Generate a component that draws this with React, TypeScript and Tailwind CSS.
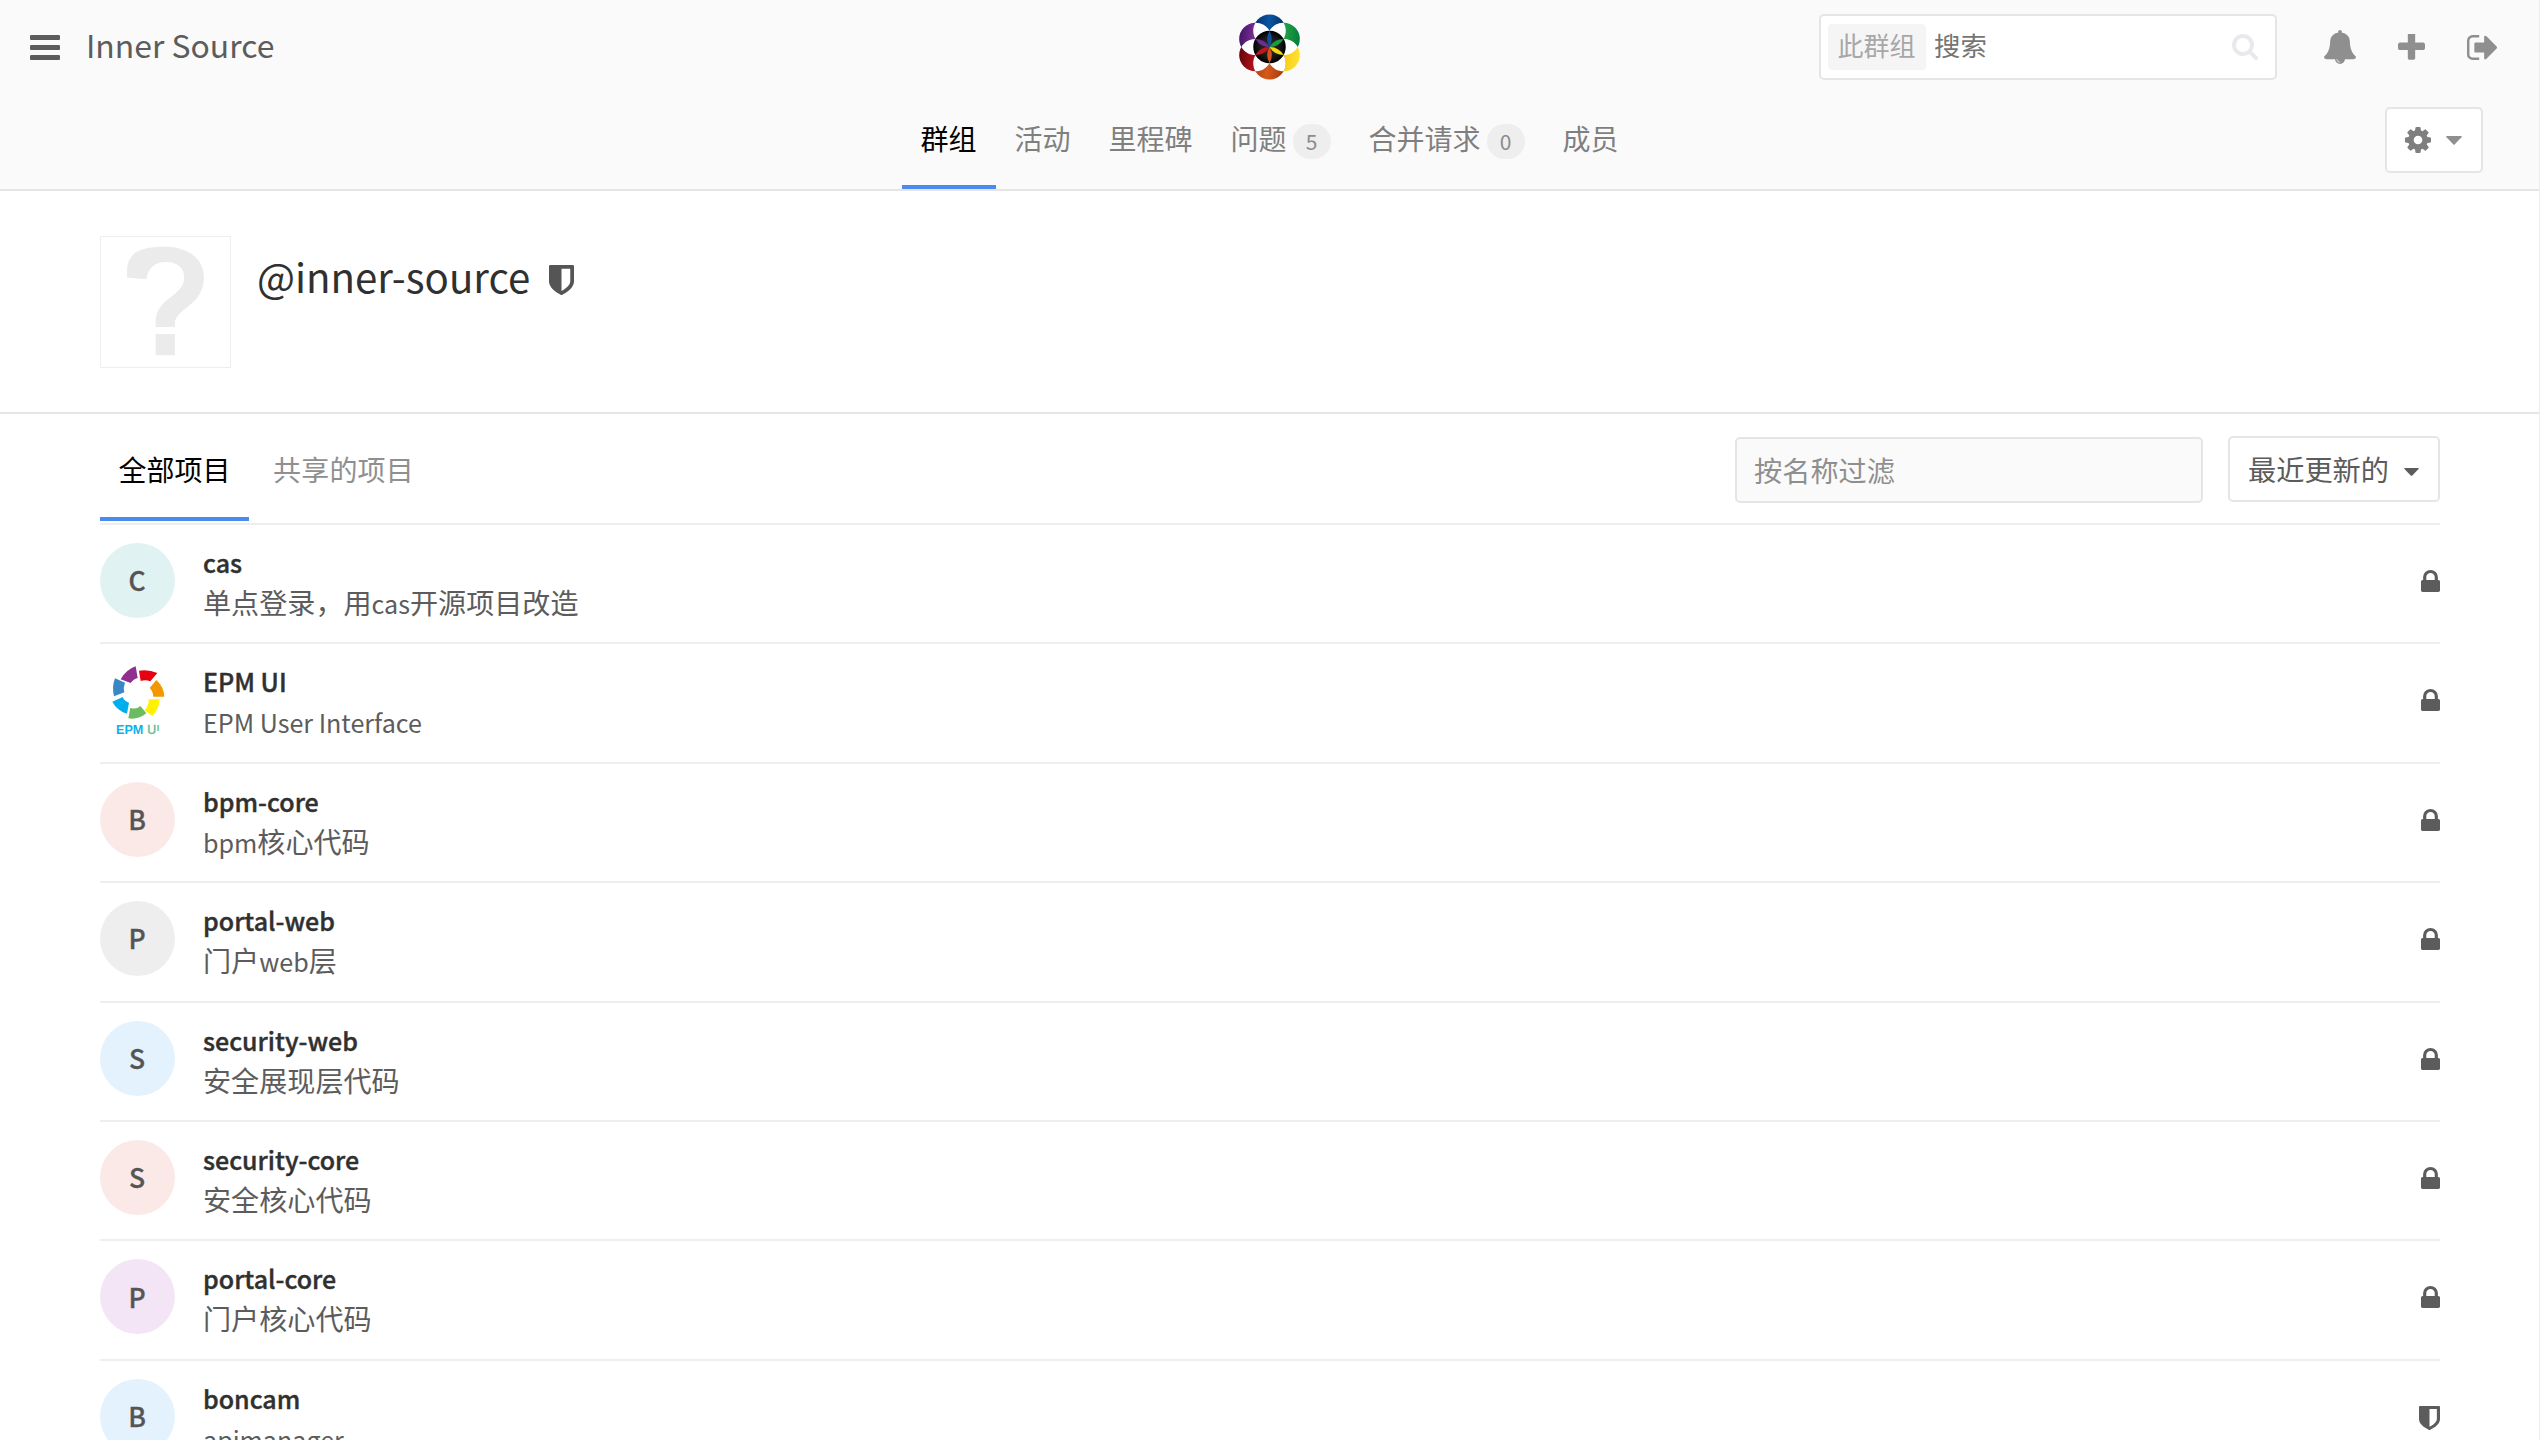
import React from 'react';

const PATHS = {
  bars: {
    box: '128 256 1536 1280',
    d: 'M1664 1344v128q0 26-19 45t-45 19h-1408q-26 0-45-19t-19-45v-128q0-26 19-45t45-19h1408q26 0 45 19t19 45zm0-512v128q0 26-19 45t-45 19h-1408q-26 0-45-19t-19-45v-128q0-26 19-45t45-19h1408q26 0 45 19t19 45zm0-512v128q0 26-19 45t-45 19h-1408q-26 0-45-19t-19-45v-128q0-26 19-45t45-19h1408q26 0 45 19t19 45z',
  },
  bell: {
    box: '64 0 1664 1792',
    d: 'M912 1696q0-16-16-16-59 0-101.5-42.5t-42.5-101.5q0-16-16-16t-16 16q0 73 51.5 124.5t124.5 51.5q16 0 16-16zm816-288q0 52-38 90t-90 38h-448q0 106-75 181t-181 75-181-75-75-181h-448q-52 0-90-38t-38-90q50-42 91-88t85-119.5 74.5-158.5 50-206 19.5-260q0-152 117-282.5t307-158.5q-8-19-8-39 0-40 28-68t68-28 68 28 28 68q0 20-8 39 190 28 307 158.5t117 282.5q0 139 19.5 260t50 206 74.5 158.5 85 119.5 91 88z',
  },
  plus: {
    box: '192 192 1408 1408',
    d: 'M1600 736v192q0 40-28 68t-68 28h-416v416q0 40-28 68t-68 28h-192q-40 0-68-28t-28-68v-416h-416q-40 0-68-28t-28-68v-192q0-40 28-68t68-28h416v-416q0-40 28-68t68-28h192q40 0 68 28t28 68v416h416q40 0 68 28t28 68z',
  },
  signOut: {
    box: '64 256 1568 1280',
    d: 'M704 1440q0 4 1 20t.5 26.5-3 23.5-10 19.5-20.5 6.5h-320q-119 0-203.5-84.5t-84.5-203.5v-704q0-119 84.5-203.5t203.5-84.5h320q13 0 22.5 9.5t9.5 22.5q0 4 1 20t.5 26.5-3 23.5-10 19.5-20.5 6.5h-320q-66 0-113 47t-47 113v704q0 66 47 113t113 47h312l11.5 1 11.5 3 8 5.5 7 9 2 13.5zm928-544q0 26-19 45l-544 544q-19 19-45 19t-45-19-19-45v-288h-448q-26 0-45-19t-19-45v-384q0-26 19-45t45-19h448v-288q0-26 19-45t45-19 45 19l544 544q19 19 19 45z',
  },
  cog: {
    box: '128 128 1536 1536',
    d: 'M1152 896q0-106-75-181t-181-75-181 75-75 181 75 181 181 75 181-75 75-181zm512-109v222q0 12-8 23t-20 13l-185 28q-19 54-39 91 35 50 107 138 10 12 10 25t-9 23q-27 37-99 108t-94 71q-12 0-26-9l-138-108q-44 23-91 38-16 136-29 186-7 28-36 28h-222q-14 0-24.5-8.5t-11.5-21.5l-28-184q-49-16-90-37l-141 107q-10 9-25 9-14 0-25-11-126-114-165-168-7-10-7-23 0-12 8-23 15-21 51-66.5t54-70.5q-27-50-41-99l-183-27q-13-2-21-12.5t-8-23.5v-222q0-12 8-23t19-13l186-28q14-46 39-92-40-57-107-138-10-12-10-24 0-10 9-23 26-36 98.5-107.5t94.5-71.5q13 0 26 10l138 107q44-23 91-38 16-136 29-186 7-28 36-28h222q14 0 24.5 8.5t11.5 21.5l28 184q49 16 90 37l142-107q9-9 24-9 13 0 25 10 129 119 165 170 7 8 7 22 0 12-8 23-15 21-51 66.5t-54 70.5q26 50 41 98l183 28q13 2 21 12.5t8 23.5z',
  },
  lock: {
    box: '320 128 1152 1408',
    d: 'M640 768h512v-192q0-106-75-181t-181-75-181 75-75 181v192zm832 96v576q0 40-28 68t-68 28h-960q-40 0-68-28t-28-68v-576q0-40 28-68t68-28h32v-192q0-184 132-316t316-132 316 132 132 316v192h32q40 0 68 28t28 68z',
  },
  shield: {
    box: '256 128 1280 1536',
    d: 'M1344 960v-640h-448v1137q119-63 213-137 235-184 235-360zm192-768v768q0 86-33.5 170.5t-83 150-118 127.5-126.5 103-121 77.5-89.5 49.5-42.5 20q-12 6-26 6t-26-6q-16-7-42.5-20t-89.5-49.5-121-77.5-126.5-103-118-127.5-83-150-33.5-170.5v-768q0-26 19-45t45-19h1152q26 0 45 19t19 45z',
  },
  search: {
    box: '64 128 1664 1664',
    d: 'M1216 832q0-185-131.5-316.5t-316.5-131.5-316.5 131.5-131.5 316.5 131.5 316.5 316.5 131.5 316.5-131.5 131.5-316.5zm512 832q0 52-38 90t-90 38q-54 0-90-38l-343-342q-179 124-399 124-143 0-273.5-55.5t-225-150-150-225-55.5-273.5 55.5-273.5 150-225 225-150 273.5-55.5 273.5 55.5 225 150 150 225 55.5 273.5q0 220-124 399l343 343q37 37 37 90z',
  },
};

function Icon({ name, className }: { name: keyof typeof PATHS; className: string }) {
  return (
    <svg viewBox={PATHS[name].box} preserveAspectRatio="none" fill="currentColor" className={'shrink-0 ' + className}>
      <path d={PATHS[name].d} />
    </svg>
  );
}

function Caret({ className }: { className: string }) {
  return (
    <svg viewBox="0 0 16 9" preserveAspectRatio="none" fill="currentColor" className={'shrink-0 ' + className}>
      <path d="M0.8 0h14.4q1 0.3 0.3 1.2L8.6 8.6q-0.6 0.5-1.2 0L0.5 1.2Q-0.2 0.3 0.8 0z" />
    </svg>
  );
}

const R = 49;
const polar = (deg: number, r: number): [number, number] => [
  r * Math.cos((deg * Math.PI) / 180),
  -r * Math.sin((deg * Math.PI) / 180),
];
const lens = (deg: number, length: number) => {
  const [x, y] = polar(deg, length);
  return `M0 0A${R} ${R} 0 0 1 ${x} ${y}A${R} ${R} 0 0 1 0 0z`;
};

const FLOWER = [
  { deg: 90, from: '#062a63', mid: '#0a56a2', to: '#062a63', petal: '#0f4f9c' },
  { deg: 30, from: '#35b24a', mid: '#27a548', to: '#04803c', petal: '#1b9a40' },
  { deg: -30, from: '#e3a800', mid: '#f8c918', to: '#ffe02e', petal: '#f7d70e' },
  { deg: -90, from: '#a33a0c', mid: '#d65a1a', to: '#a33a0c', petal: '#d4541a' },
  { deg: -150, from: '#5c0408', mid: '#b01218', to: '#b01218', petal: '#c2181b' },
  { deg: 150, from: '#3d1460', mid: '#7d2c96', to: '#7d2c96', petal: '#6f2b8f' },
];

function Flower() {
  return (
    <svg viewBox="-92 -99 184 198" className="h-[66px] w-[61px]">
      <defs>
        {FLOWER.map((f, i) => (
          <linearGradient key={i} id={'petal' + i} x1="0" y1="0" x2="1" y2="0.1">
            <stop offset="0" stopColor={f.from} />
            <stop offset="0.5" stopColor={f.mid} />
            <stop offset="1" stopColor={f.to} />
          </linearGradient>
        ))}
        <radialGradient id="core">
          <stop offset="0" stopColor="#333" />
          <stop offset="0.7" stopColor="#151515" />
          <stop offset="1" stopColor="#000" />
        </radialGradient>
      </defs>
      {FLOWER.map((f, i) => {
        const [cx, cy] = polar(f.deg, R);
        return <circle key={i} cx={cx} cy={cy} r={R} fill={`url(#petal${i})`} />;
      })}
      {FLOWER.map((f, i) => (
        <path key={i} d={lens(f.deg + 30, R * Math.sqrt(3))} fill="#fff" />
      ))}
      <circle r={R} fill="url(#core)" />
      {FLOWER.map((f, i) => (
        <path key={i} d={lens(f.deg, R)} fill={f.petal} />
      ))}
    </svg>
  );
}

function EpmLogo() {
  return (
    <svg viewBox="30 65 225 225" className="size-[75px] shrink-0">
      <path fill="#8f3090" d="M92 117Q108 88 137 78L143 113Q130 116 122 128z" />
      <path fill="#e60012" d="M147 91Q175 86 202 98L181 123Q167 117 152 122z" />
      <path fill="#f39800" d="M199 119Q222 140 223 169L190 169Q189 153 179 143z" />
      <path fill="#fff100" d="M176 177H209Q208 205 187 227L164 210Q177 196 176 177z" />
      <path fill="#6bbb60" d="M121 202Q138 209 151 197L169 219Q144 239 115 234z" />
      <path fill="#00aeeb" d="M98 170Q103 183 117 187L111 220Q81 211 67 184z" />
      <path fill="#3a87c8" d="M75 114L105 127Q99 141 103 156L72 168Q65 140 75 114z" />
      <text y="280" fontFamily="Liberation Sans, sans-serif" fontWeight="700" fontSize="37">
        <tspan x="78" fill="#0db1ea" textLength="82" lengthAdjust="spacingAndGlyphs">EPM</tspan>
        <tspan x="172" fill="#66b98a" fontWeight="400" stroke="#66b98a" strokeWidth="1.2">U</tspan>
        <tspan x="200" y="273" fill="#6dbb62" fontSize="27">I</tspan>
      </text>
    </svg>
  );
}

/* Latin runs are set smaller than the Chinese runs around them. */
function Mixed({ text }: { text: string }) {
  return (
    <>
      {text.split(/([\x20-\x7e]+)/).filter(Boolean).map((run, i) => (
        <span key={i} className={/^[\x20-\x7e]/.test(run) ? 'text-[25.1px]' : 'text-[28.1px]'}>
          {run}
        </span>
      ))}
    </>
  );
}

const TABS = [
  { label: '群组', active: true },
  { label: '活动' },
  { label: '里程碑' },
  { label: '问题', count: 5 },
  { label: '合并请求', count: 0 },
  { label: '成员' },
];

const PROJECTS = [
  { name: 'cas', desc: '单点登录，用cas开源项目改造', letter: 'C', bg: 'bg-[#e0f2f1]', icon: 'lock' },
  { name: 'EPM UI', desc: 'EPM User Interface', letter: '', bg: '', icon: 'lock' },
  { name: 'bpm-core', desc: 'bpm核心代码', letter: 'B', bg: 'bg-[#fbe9e7]', icon: 'lock' },
  { name: 'portal-web', desc: '门户web层', letter: 'P', bg: 'bg-[#eeeeee]', icon: 'lock' },
  { name: 'security-web', desc: '安全展现层代码', letter: 'S', bg: 'bg-[#e3f2fd]', icon: 'lock' },
  { name: 'security-core', desc: '安全核心代码', letter: 'S', bg: 'bg-[#fbe9e7]', icon: 'lock' },
  { name: 'portal-core', desc: '门户核心代码', letter: 'P', bg: 'bg-[#f3e5f5]', icon: 'lock' },
  { name: 'boncam', desc: 'apimanager', letter: 'B', bg: 'bg-[#e3f2fd]', icon: 'shield' },
] as const;

export default function App() {
  return (
    <div className="h-[1440px] w-[2540px] overflow-hidden border-r border-[#ededed] bg-white font-['Noto_Sans_CJK_SC',sans-serif] text-[28px] text-[#5c5c5c]">
      <header className="h-[191px] border-b-2 border-[#e5e5e5] bg-[#fafafa]">
        <div className="grid h-[94px] grid-cols-[1fr_61px_1fr] items-center">
          <div className="flex items-center pl-[30px]">
            <Icon name="bars" className="h-[25px] w-[30px]" />
            <h1 className="mb-[7px] ml-[26px] text-[31.9px] leading-[40px]">Inner Source</h1>
          </div>
          <Flower />
          <div className="flex items-center justify-end pr-[42px]">
            <div className="flex h-[66px] w-[458px] items-center rounded-[5px] border-2 border-[#e5e5e5] bg-white pr-[17px] pl-[7px]">
              <span className="flex h-[46px] w-[98px] items-center justify-center rounded-[4px] bg-[#f5f5f5] pr-[1px] pb-[4px] text-[26px] leading-none text-[#a7a7a7]">此群组</span>
              <span className="mb-[4px] ml-2 flex-1 text-[26.4px] leading-none text-[#757575]">搜索</span>
              <Icon name="search" className="size-[26px] text-[#e7e9ed]" />
            </div>
            <Icon name="bell" className="ml-[47px] h-[34px] w-[32px] text-[#8f8f8f]" />
            <Icon name="plus" className="ml-[42px] size-[27px] text-[#8f8f8f]" />
            <Icon name="signOut" className="ml-[42px] h-[25px] w-[30px] text-[#8f8f8f]" />
          </div>
        </div>
        <div className="grid h-[95px] grid-cols-[902px_1fr_auto]">
          <div />
          <nav className="flex">
            {TABS.map((t) => (
              <div
                key={t.label}
                className={
                  t.active
                    ? 'flex items-center border-b-4 border-[#4a8bee] pr-[19.5px] pl-[18.5px] text-black'
                    : 'flex items-center border-b-4 border-transparent pr-[19.5px] pl-[18.5px] text-[#7f7f7f]'
                }
              >
                <span className="mb-[3px] leading-none">{t.label}</span>
                {t.count !== undefined && (
                  <span className="mt-[4px] mr-[-0.5px] ml-[6.5px] flex h-[35px] w-[38px] items-center justify-center rounded-full bg-[#eeeeee] pr-[1px] text-[21px] leading-none text-[#8c8c8c]">
                    {t.count}
                  </span>
                )}
              </div>
            ))}
          </nav>
          <button className="mt-[13px] mr-[56px] flex h-[66px] w-[98px] items-center rounded-[5px] border-2 border-[#e5e5e5] bg-white pl-[18px]">
            <Icon name="cog" className="size-[26px] text-[#7f7f7f]" />
            <Caret className="ml-[15px] h-[9px] w-[16px] text-[#8f8f8f]" />
          </button>
        </div>
      </header>

      <section className="flex h-[223px] border-b-2 border-[#e5e5e5] pt-[45px] pl-[100px]">
        <div className="flex h-[132px] w-[131px] items-start justify-center border border-[#eeeeee]">
          <svg viewBox="0 0 132 132" className="size-[130px] shrink-0">
            <path d="M26.5 31.5C28 15 42 10 65 10C88 10 104.500 22 104.500 41C104.500 70 75 72 75 88V91.500H55.500V86C55.500 62 84.500 60 84.500 41C84.500 31 77 25.500 66 25.500C55 25.500 48 31 46 43L26.500 41Z" fill="#ebebeb" />
            <rect x="55.500" y="98.500" width="19.500" height="21.500" fill="#ebebeb" />
          </svg>
        </div>
        <div className="ml-[26px] flex h-[88px] items-center">
          <h2 className="mb-[9px] text-[40.2px] leading-[48px] text-[#303030]">@inner-source</h2>
          <Icon name="shield" className="ml-[19px] h-[30px] w-[25px] text-[#555555]" />
        </div>
      </section>

      <main className="px-[100px]">
        <div className="mr-[-1px] flex h-[111px] border-b-2 border-[#eeeeee] pb-[2px]">
          <div className="flex w-[149px] items-center justify-center border-b-4 border-[#4a8bee] pt-[6px] text-black">
            <span className="leading-[30px]">全部项目</span>
          </div>
          <div className="flex items-center border-b-4 border-transparent pt-[6px] pl-6 tracking-[0.2px] text-[#8f8f8f]">
            <span className="leading-[30px]">共享的项目</span>
          </div>
          <div className="mt-[23px] ml-auto flex h-[66px] w-[468px] items-center rounded-[5px] border-2 border-[#e5e5e5] bg-[#fafafa] pl-[17px] text-[28.2px] text-[#8f8f8f]">
            <span className="leading-none">按名称过滤</span>
          </div>
          <button className="mt-[22px] ml-[25px] flex h-[66px] w-[212px] items-center rounded-[5px] border-2 border-[#e5e5e5] bg-white pl-[18px] text-[28.2px]">
            <span className="leading-none">最近更新的</span>
            <Caret className="mt-[6px] ml-[15px] h-[8px] w-[15px]" />
          </button>
        </div>
        <ul className="mr-[-1px]">
          {PROJECTS.map((p) => (
            <li key={p.name} className="flex h-[119.38px] border-b-2 border-[#eeeeee] pt-[18px]">
              {p.letter ? (
                <div className={'flex size-[75px] shrink-0 items-center justify-center rounded-full pr-[1px] text-[26.5px] leading-none font-medium text-[#555555] [-webkit-text-stroke:0.3px] ' + p.bg}>
                  {p.letter}
                </div>
              ) : (
                <EpmLogo />
              )}
              <div className="mt-[-1px] ml-[28px] flex-1">
                <div className="h-[40px] text-[25px] leading-[40px] font-medium text-[#303030] [-webkit-text-stroke:0.4px]">{p.name}</div>
                <div className="h-[40px] leading-[40px]">
                  <Mixed text={p.desc} />
                </div>
              </div>
              <Icon name={p.icon} className={p.icon === 'lock' ? 'mt-[27px] h-[22px] w-[19px]' : 'mt-[27px] h-[24px] w-[21px]'} />
            </li>
          ))}
        </ul>
      </main>
    </div>
  );
}
